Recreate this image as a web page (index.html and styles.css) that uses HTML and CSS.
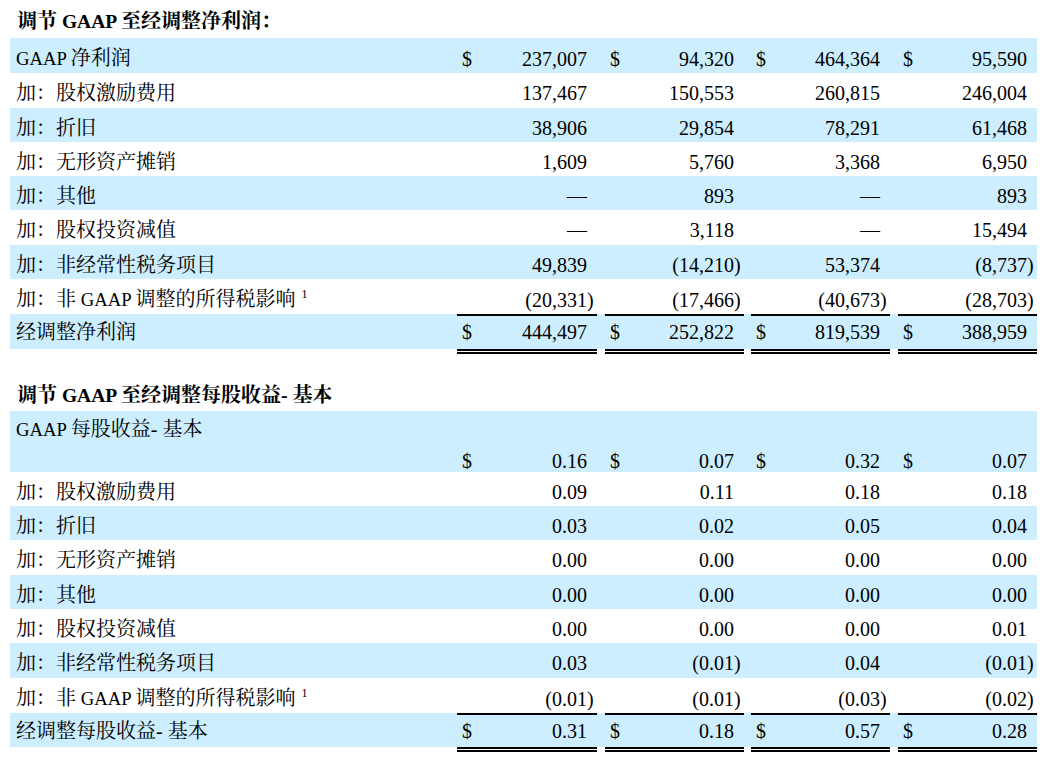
FILE: index.html
```html
<!DOCTYPE html>
<html lang="zh">
<head>
<meta charset="utf-8">
<title>调节 GAAP</title>
<link rel="stylesheet" href="styles.css">
</head>
<body>
<div class="page">
  <div class="title">调节<span class="lat"> GAAP </span>至经调整净利润：</div>
  <table class="fin">
    <colgroup>
      <col class="c-lab"><col class="c-cur"><col class="c-n1"><col class="c-sp8">
      <col class="c-cur"><col class="c-n2"><col class="c-sp7">
      <col class="c-cur"><col class="c-n2"><col class="c-sp8">
      <col class="c-cur"><col class="c-n2">
    </colgroup>
    <tr class="b">
      <td class="lab"><span class="lat">GAAP </span>净利润</td>
      <td class="cur">$</td><td class="num">237,007</td><td class="sp"></td>
      <td class="cur">$</td><td class="num">94,320</td><td class="sp"></td>
      <td class="cur">$</td><td class="num">464,364</td><td class="sp"></td>
      <td class="cur">$</td><td class="num">95,590</td>
    </tr>
    <tr>
      <td class="lab">加：股权激励费用</td>
      <td class="cur"></td><td class="num">137,467</td><td class="sp"></td>
      <td class="cur"></td><td class="num">150,553</td><td class="sp"></td>
      <td class="cur"></td><td class="num">260,815</td><td class="sp"></td>
      <td class="cur"></td><td class="num">246,004</td>
    </tr>
    <tr class="b">
      <td class="lab">加：折旧</td>
      <td class="cur"></td><td class="num">38,906</td><td class="sp"></td>
      <td class="cur"></td><td class="num">29,854</td><td class="sp"></td>
      <td class="cur"></td><td class="num">78,291</td><td class="sp"></td>
      <td class="cur"></td><td class="num">61,468</td>
    </tr>
    <tr>
      <td class="lab">加：无形资产摊销</td>
      <td class="cur"></td><td class="num">1,609</td><td class="sp"></td>
      <td class="cur"></td><td class="num">5,760</td><td class="sp"></td>
      <td class="cur"></td><td class="num">3,368</td><td class="sp"></td>
      <td class="cur"></td><td class="num">6,950</td>
    </tr>
    <tr class="b">
      <td class="lab">加：其他</td>
      <td class="cur"></td><td class="num">—</td><td class="sp"></td>
      <td class="cur"></td><td class="num">893</td><td class="sp"></td>
      <td class="cur"></td><td class="num">—</td><td class="sp"></td>
      <td class="cur"></td><td class="num">893</td>
    </tr>
    <tr>
      <td class="lab">加：股权投资减值</td>
      <td class="cur"></td><td class="num">—</td><td class="sp"></td>
      <td class="cur"></td><td class="num">3,118</td><td class="sp"></td>
      <td class="cur"></td><td class="num">—</td><td class="sp"></td>
      <td class="cur"></td><td class="num">15,494</td>
    </tr>
    <tr class="b">
      <td class="lab">加：非经常性税务项目</td>
      <td class="cur"></td><td class="num">49,839</td><td class="sp"></td>
      <td class="cur"></td><td class="num">(14,210<span class="rp">)</span></td><td class="sp"></td>
      <td class="cur"></td><td class="num">53,374</td><td class="sp"></td>
      <td class="cur"></td><td class="num">(8,737<span class="rp">)</span></td>
    </tr>
    <tr>
      <td class="lab">加：非<span class="lat"> GAAP </span>调整的所得税影响<span class="fn">1</span></td>
      <td class="cur"></td><td class="num">(20,331<span class="rp">)</span></td><td class="sp"></td>
      <td class="cur"></td><td class="num">(17,466<span class="rp">)</span></td><td class="sp"></td>
      <td class="cur"></td><td class="num">(40,673<span class="rp">)</span></td><td class="sp"></td>
      <td class="cur"></td><td class="num">(28,703<span class="rp">)</span></td>
    </tr>
    <tr class="b tot">
      <td class="lab">经调整净利润</td>
      <td class="cur">$</td><td class="num">444,497</td><td class="sp"></td>
      <td class="cur">$</td><td class="num">252,822</td><td class="sp"></td>
      <td class="cur">$</td><td class="num">819,539</td><td class="sp"></td>
      <td class="cur">$</td><td class="num">388,959</td>
    </tr>
  </table>

  <div class="title sec2">调节<span class="lat"> GAAP </span>至经调整每股收益- 基本</div>
  <table class="fin">
    <colgroup>
      <col class="c-lab"><col class="c-cur"><col class="c-n1"><col class="c-sp8">
      <col class="c-cur"><col class="c-n2"><col class="c-sp7">
      <col class="c-cur"><col class="c-n2"><col class="c-sp8">
      <col class="c-cur"><col class="c-n2">
    </colgroup>
    <tr class="b tallrow">
      <td class="lab tall"><span class="lat">GAAP </span>每股收益- 基本</td>
      <td class="cur">$</td><td class="num">0.16</td><td class="sp"></td>
      <td class="cur">$</td><td class="num">0.07</td><td class="sp"></td>
      <td class="cur">$</td><td class="num">0.32</td><td class="sp"></td>
      <td class="cur">$</td><td class="num">0.07</td>
    </tr>
    <tr>
      <td class="lab">加：股权激励费用</td>
      <td class="cur"></td><td class="num">0.09</td><td class="sp"></td>
      <td class="cur"></td><td class="num">0.11</td><td class="sp"></td>
      <td class="cur"></td><td class="num">0.18</td><td class="sp"></td>
      <td class="cur"></td><td class="num">0.18</td>
    </tr>
    <tr class="b">
      <td class="lab">加：折旧</td>
      <td class="cur"></td><td class="num">0.03</td><td class="sp"></td>
      <td class="cur"></td><td class="num">0.02</td><td class="sp"></td>
      <td class="cur"></td><td class="num">0.05</td><td class="sp"></td>
      <td class="cur"></td><td class="num">0.04</td>
    </tr>
    <tr>
      <td class="lab">加：无形资产摊销</td>
      <td class="cur"></td><td class="num">0.00</td><td class="sp"></td>
      <td class="cur"></td><td class="num">0.00</td><td class="sp"></td>
      <td class="cur"></td><td class="num">0.00</td><td class="sp"></td>
      <td class="cur"></td><td class="num">0.00</td>
    </tr>
    <tr class="b">
      <td class="lab">加：其他</td>
      <td class="cur"></td><td class="num">0.00</td><td class="sp"></td>
      <td class="cur"></td><td class="num">0.00</td><td class="sp"></td>
      <td class="cur"></td><td class="num">0.00</td><td class="sp"></td>
      <td class="cur"></td><td class="num">0.00</td>
    </tr>
    <tr>
      <td class="lab">加：股权投资减值</td>
      <td class="cur"></td><td class="num">0.00</td><td class="sp"></td>
      <td class="cur"></td><td class="num">0.00</td><td class="sp"></td>
      <td class="cur"></td><td class="num">0.00</td><td class="sp"></td>
      <td class="cur"></td><td class="num">0.01</td>
    </tr>
    <tr class="b">
      <td class="lab">加：非经常性税务项目</td>
      <td class="cur"></td><td class="num">0.03</td><td class="sp"></td>
      <td class="cur"></td><td class="num">(0.01<span class="rp">)</span></td><td class="sp"></td>
      <td class="cur"></td><td class="num">0.04</td><td class="sp"></td>
      <td class="cur"></td><td class="num">(0.01<span class="rp">)</span></td>
    </tr>
    <tr>
      <td class="lab">加：非<span class="lat"> GAAP </span>调整的所得税影响<span class="fn">1</span></td>
      <td class="cur"></td><td class="num">(0.01<span class="rp">)</span></td><td class="sp"></td>
      <td class="cur"></td><td class="num">(0.01<span class="rp">)</span></td><td class="sp"></td>
      <td class="cur"></td><td class="num">(0.03<span class="rp">)</span></td><td class="sp"></td>
      <td class="cur"></td><td class="num">(0.02<span class="rp">)</span></td>
    </tr>
    <tr class="b tot">
      <td class="lab">经调整每股收益- 基本</td>
      <td class="cur">$</td><td class="num">0.31</td><td class="sp"></td>
      <td class="cur">$</td><td class="num">0.18</td><td class="sp"></td>
      <td class="cur">$</td><td class="num">0.57</td><td class="sp"></td>
      <td class="cur">$</td><td class="num">0.28</td>
    </tr>
  </table>
</div>
</body>
</html>
```

FILE: styles.css
```css
body {
  margin: 0;
  background: #ffffff;
  color: #000000;
  font-family: "Liberation Serif", "Noto Serif CJK SC", "Noto Sans CJK SC", serif;
  font-size: 20px;
}

.page {
  padding: 0 8px 0 10px;
}

.title {
  font-weight: bold;
  line-height: 22px;
  padding: 10px 0 5px 7px;
}

.title .lat {
  font-size: 19.5px;
}

.sec2 {
  margin-top: 20px;
  padding-bottom: 4px;
}

.fin {
  width: 1027px;
  border-collapse: separate;
  border-spacing: 0;
  table-layout: fixed;
}

.c-lab { width: 447px; }
.c-cur { width: 30px; }
.c-n1 { width: 110px; }
.c-n2 { width: 109px; }
.c-sp8 { width: 8px; }
.c-sp7 { width: 7px; }

.fin td {
  padding: 9px 0 3.3px 0;
  line-height: 22px;
  vertical-align: bottom;
  white-space: nowrap;
}

.fin tr.b td {
  background: #cceeff;
}

.fin td.lab {
  padding-left: 6px;
}

.fin td.lab .lat {
  font-size: 18.7px;
}

.fin td.lab.tall {
  padding-top: 7px;
  padding-bottom: 31px;
  vertical-align: top;
}

.fin tr.tallrow td.cur,
.fin tr.tallrow td.num {
  padding-bottom: 0;
}

.fin td.cur {
  padding-left: 5px;
}

.fin td.num {
  text-align: right;
  padding-right: 10px;
}

.rp {
  margin-right: -0.333em;
}

.fn {
  font-size: 12px;
  line-height: 0;
  vertical-align: 8px;
  margin-left: 6px;
}

.fin tr.tot td {
  padding-top: 5px;
  padding-bottom: 5.4px;
}

.fin tr.tot td.cur,
.fin tr.tot td.num {
  border-top: 2px solid #000000;
  border-bottom: 5px double #000000;
  background-clip: padding-box;
}

.fin tr.tot td.lab,
.fin tr.tot td.sp {
  border-top: 2px solid #cceeff;
  border-bottom: 5px solid #ffffff;
  background-clip: padding-box;
}
```
